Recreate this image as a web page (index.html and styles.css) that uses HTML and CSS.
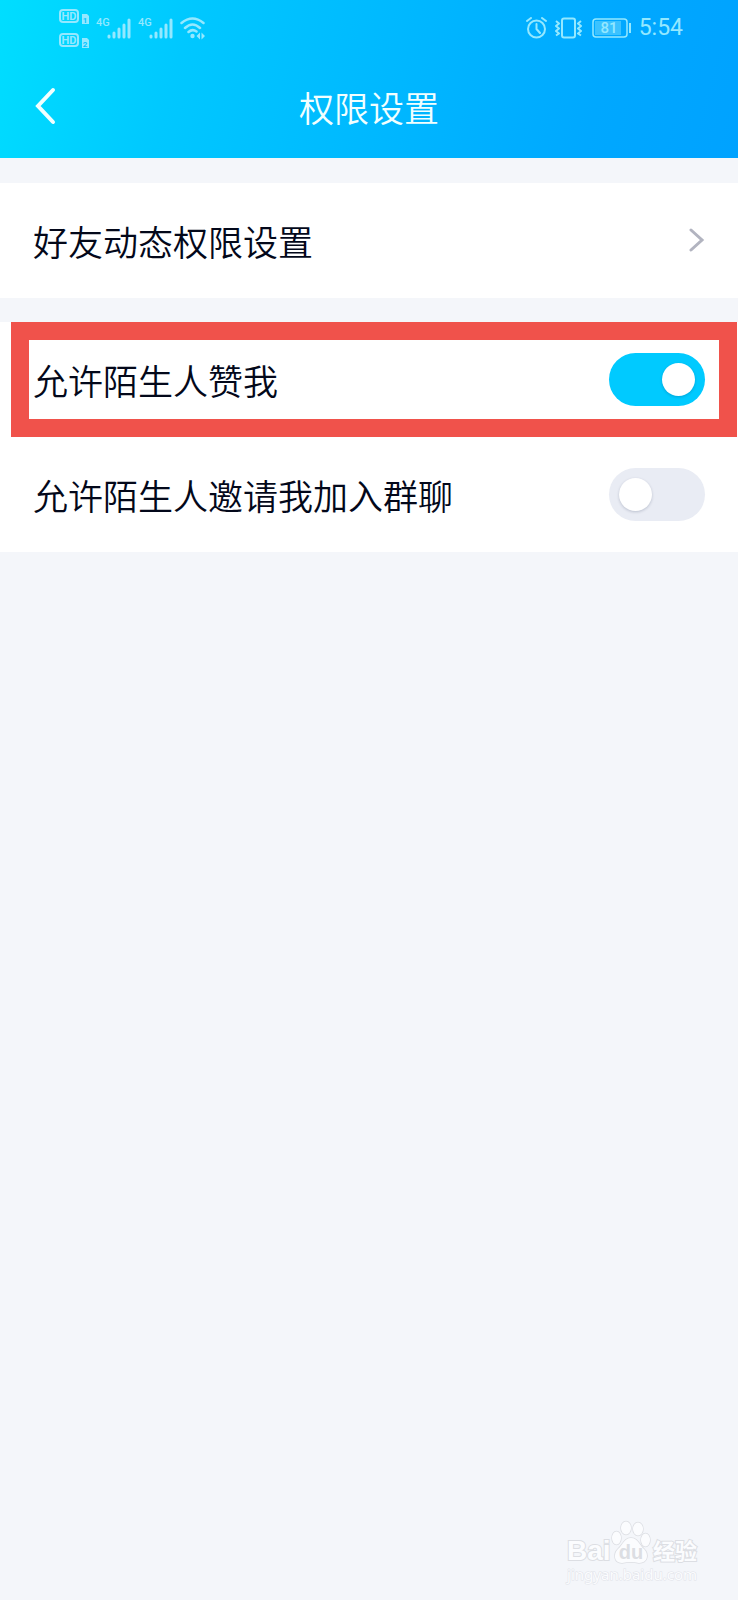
FILE: index.html
```html
<!DOCTYPE html>
<html lang="zh-CN">
<head>
<meta charset="utf-8">
<meta name="viewport" content="width=device-width, initial-scale=1">
<title>权限设置</title>
<link rel="stylesheet" href="styles.css">
</head>
<body>
<header class="header">
  <div class="status">
    <div class="status-left">
      <svg class="icon" width="32" height="40" viewBox="0 0 32 40">
        <g fill="none" stroke="currentColor" stroke-width="2">
          <rect x="1" y="2" width="18" height="12" rx="3"/>
          <rect x="1" y="26" width="18" height="12" rx="3"/>
        </g>
        <g fill="currentColor">
          <path d="M23 6h5l2 2v8h-7zM23 30h5l2 2v8h-7z"/>
        </g>
        <g class="hd-text" fill="currentColor">
          <text x="10" y="12" text-anchor="middle">HD</text>
          <text x="10" y="36" text-anchor="middle">HD</text>
        </g>
        <g class="sim-text">
          <text x="26" y="15" text-anchor="middle">1</text>
          <text x="26" y="39" text-anchor="middle">2</text>
        </g>
      </svg>
      <svg class="icon signal" width="36" height="24" viewBox="0 0 36 24">
        <text class="net-text" x="0" y="10" fill="currentColor">4G</text>
        <path d="M13 21v-1M18 21v-4M23 21v-8M28 21v-12M33 21v-17" fill="none" stroke="currentColor" stroke-width="3" stroke-linecap="round"/>
      </svg>
      <svg class="icon signal" width="36" height="24" viewBox="0 0 36 24">
        <text class="net-text" x="0" y="10" fill="currentColor">4G</text>
        <path d="M13 21v-1M18 21v-4M23 21v-8M28 21v-12M33 21v-17" fill="none" stroke="currentColor" stroke-width="3" stroke-linecap="round"/>
      </svg>
      <svg class="icon" width="26" height="24" viewBox="0 0 26 24">
        <path d="M1.500 7Q12.500-2 23.500 7M5 12Q12.500 5 20 12M8.500 16Q12.500 12.500 16.500 15.500" fill="none" stroke="currentColor" stroke-width="2.500" stroke-linecap="round"/>
        <circle cx="12.500" cy="20" r="2.200" fill="currentColor"/>
        <path d="M16.500 20l3.500-3.500v7zM25 20l-3.500-3.500v7z" fill="currentColor"/>
      </svg>
    </div>
    <div class="status-right">
      <svg class="icon" width="22" height="22" viewBox="0 0 22 22" fill="none" stroke="currentColor" stroke-width="2" stroke-linecap="round">
        <circle cx="10.500" cy="12" r="8.500"/><path d="M10.500 7v5l3.500 4M1 4l4-3M20 4l-4-3"/>
      </svg>
      <svg class="icon" width="28" height="22" viewBox="0 0 28 22" fill="none" stroke="currentColor" stroke-width="2" stroke-linejoin="round">
        <rect x="7" y="1.500" width="13" height="19" rx="2"/>
        <path d="M1 4l3 2.500-3 2.500 3 2.500-3 2.500 3 2.500-3 2M26 4l-3 2.500 3 2.500-3 2.500 3 2.500-3 2.500 3 2"/>
      </svg>
      <svg class="icon battery" width="40" height="20" viewBox="0 0 40 20">
        <rect x="1" y="1" width="34" height="18" rx="3" fill="none" stroke="currentColor" stroke-width="1.500"/>
        <rect x="3" y="3" width="26" height="14" fill="currentColor" opacity=".4"/>
        <rect x="37" y="5" width="2" height="10" fill="currentColor"/>
        <text class="battery-text" x="17" y="15" text-anchor="middle" fill="currentColor">81</text>
      </svg>
      <time class="clock">5:54</time>
    </div>
  </div>
  <div class="titlebar">
    <button class="back" type="button" aria-label="返回">
      <svg class="icon" width="22" height="40" viewBox="0 0 22 40" fill="none" stroke="currentColor" stroke-width="4" stroke-linecap="round"><path d="M19 3L4 19L19 35"/></svg>
    </button>
    <h1 class="title">权限设置</h1>
  </div>
</header>
<main class="groups">
  <section class="group">
    <a class="row" href="#friends">
      <span>好友动态权限设置</span>
      <svg class="icon chevron" width="16" height="26" viewBox="0 0 16 26" fill="none" stroke="currentColor" stroke-width="3" stroke-linecap="round"><path d="M2 2L13 12L2 22"/></svg>
    </a>
  </section>
  <section class="group">
    <div class="row marked">
      <label for="like">允许陌生人赞我</label>
      <input class="switch" id="like" type="checkbox" role="switch" checked>
    </div>
    <div class="row">
      <label for="invite">允许陌生人邀请我加入群聊</label>
      <input class="switch" id="invite" type="checkbox" role="switch">
    </div>
  </section>
</main>
<footer class="watermark">
  <div class="brand">
    <span class="brand-text">Bai</span>
    <svg class="icon paw" width="40" height="44" viewBox="0 0 40 44" fill="#fbfcfe" stroke="#dcdee3" stroke-width="1.500">
      <ellipse cx="5.500" cy="18" rx="4.500" ry="6.500"/>
      <ellipse cx="15" cy="8" rx="5" ry="6.500"/>
      <ellipse cx="27" cy="9" rx="5" ry="6.500"/>
      <ellipse cx="34.500" cy="20" rx="4.500" ry="6.500"/>
      <path d="M20 18C13 18 12 25 7 29C2 34 3 43 11 43Q20 41 28 43C37 43 38 34 33 29C28 25 27 18 20 18Z"/>
      <text class="du-text" x="20" y="39" text-anchor="middle">du</text>
    </svg>
    <span class="brand-cn">经验</span>
  </div>
  <div class="site">jingyan.baidu.com</div>
</footer>
</body>
</html>
```
FILE: styles.css
```css
* { box-sizing: border-box; }
body {
  margin: 0;
  min-height: 100vh;
  position: relative;
  background: #f4f6fa;
  color: #03081a;
  font-family: "Noto Sans CJK SC", sans-serif;
}
.icon { display: block; flex: none; }
.header {
  color: #f2ffff;
  background: linear-gradient(105deg, #00deff 0%, #00c8ff 25%, #00a8ff 80%, #00a2ff 100%);
}
.status {
  display: flex;
  justify-content: space-between;
  height: 56px;
  padding: 0 55px 0 59px;
  color: #94e8ff;
}
.status-left, .status-right { display: flex; align-items: center; }
.status-left .icon:first-child { margin-right: 5px; }
.signal { margin-right: 6px; }
.status-right { gap: 7px; }
.battery { margin-left: 2px; }
.clock { font: 400 23px/28px Roboto, sans-serif; }
.hd-text { font: 700 11px Roboto, sans-serif; }
.sim-text { font: 700 8px Roboto, sans-serif; fill: #00c4ff; }
.net-text { font: 500 11px Roboto, sans-serif; }
.battery-text { font: 500 15px Roboto, sans-serif; }
.titlebar {
  display: grid;
  grid-template-columns: 64px 1fr 64px;
  align-items: center;
  height: 102px;
}
.back {
  padding: 0 0 0 34px;
  border: 0;
  background: none;
  color: #f2ffff;
  cursor: pointer;
}
.title {
  grid-column: 2;
  margin: 0;
  text-align: center;
  font-size: 35px;
  line-height: 52px;
  font-weight: 350;
}
.groups { display: grid; gap: 24px; padding-top: 25px; }
.group { background: #fff; }
.row {
  position: relative;
  display: flex;
  align-items: center;
  justify-content: space-between;
  height: 115px;
  padding: 0 33px;
  color: inherit;
  font-size: 35px;
  line-height: 52px;
  font-weight: 350;
  text-decoration: none;
}
.chevron { color: #b2b4c0; }
.marked::after {
  content: "";
  position: absolute;
  inset: 0 1px 0 11px;
  border: 18px solid #f0524b;
  pointer-events: none;
}
.switch {
  appearance: none;
  flex: none;
  display: flex;
  align-items: center;
  width: 96px;
  height: 53px;
  margin: 0;
  padding: 0 10px;
  border-radius: 27px;
  background: #e9ecf4;
  cursor: pointer;
}
.switch::before {
  content: "";
  width: 33px;
  height: 33px;
  border-radius: 50%;
  background: #fff;
  box-shadow: 0 1px 3px rgba(0, 20, 60, .2);
}
.switch:checked { justify-content: flex-end; background: #00caff; }
.watermark {
  position: absolute;
  right: 41px;
  bottom: 18px;
  color: #fbfcfe;
  -webkit-text-stroke: 2px #dcdee3;
  paint-order: stroke fill;
}
.brand { display: flex; align-items: flex-end; }
.brand-text { font: 700 28px/30px "Liberation Sans", sans-serif; }
.paw { margin: 0 auto 2px 0; }
.brand-cn { font: 700 22px/34px "Noto Sans CJK SC", sans-serif; }
.du-text {
  font: 700 20px "Liberation Sans", sans-serif;
  stroke: none;
  -webkit-text-stroke: 0;
  fill: #dcdee3;
}
.site {
  font: 400 15px/16px "Noto Sans", sans-serif;
  -webkit-text-stroke: 1px #e0e2e8;
}
```
